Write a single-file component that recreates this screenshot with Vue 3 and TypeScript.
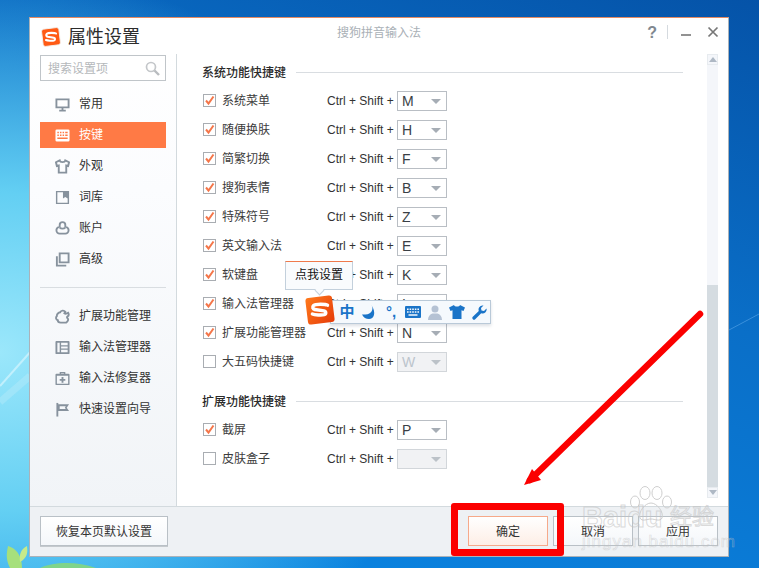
<script setup lang="ts">
interface Shape { d: string; fill?: boolean }
interface NavItem { label: string; active?: boolean; shapes: Shape[] }
interface Row { label: string; on: boolean; key: string; disabled?: boolean }

const mainNav: NavItem[] = [
  { label: '常用', shapes: [{ d: 'M1.5 2.5h13v8.5h-13z' }, { d: 'M8 11v3M4.5 14.5h7' }] },
  { label: '按键', active: true, shapes: [{ fill: true, d: 'M2 1.5h12a1.5 1.5 0 0 1 1.5 1.5v10a1.5 1.5 0 0 1-1.5 1.5H2A1.5 1.5 0 0 1 .5 13V3A1.5 1.5 0 0 1 2 1.5zM2.5 4v1.6h1.6V4zM5.3 4v1.6h1.6V4zM8.1 4v1.6h1.6V4zM10.9 4v1.6h2.6V4zM2.5 7v1.6h1.6V7zM5.3 7v1.6h1.6V7zM8.1 7v1.6h1.6V7zM10.9 7v1.6h2.6V7zM2.5 10v1.6h11V10z' }] },
  { label: '外观', shapes: [{ d: 'M5 1.5 1 3.5l1 4 2-.5V14.5h8V7l2 .5 1-4-4-2c-.5 2.5-5.5 2.5-6 0z' }] },
  { label: '词库', shapes: [{ fill: true, d: 'M1 1h14v14H1zM2.5 2.5v11h11V9l-2.5-1.5L8.5 9V2.5z' }] },
  { label: '账户', shapes: [{ d: 'M8 1.2a3 3 0 0 1 3 3V6c2 .6 3.500 1.800 3.500 3.700S13 13.500 11 13.500H5c-2 0-3.500-1.900-3.500-3.800S3 6.600 5 6V4.200a3 3 0 0 1 3-3z' }, { d: 'M5 7c1.500 1.500 4.500 1.500 6 0' }] },
  { label: '高级', shapes: [{ d: 'M5 1.500h9.500v9.500H5z' }, { d: 'M2 4.500v10h10' }] }
]
const extraNav: NavItem[] = [
  { label: '扩展功能管理', shapes: [{ d: 'M5.500 3.500C6.500 1.500 9.500 1 11 3l-1 1.500c1 .8 2.500.5 4-.5.800 1.500 1 3-.5 3.800-1 .6-1 1.600 0 2.200 1 .8.500 3-1.500 4.500H6c-1.500 0-3-1-3-2.500-2-.5-2.500-3-1-4.500-.3-2 2-3.800 3.500-4z' }] },
  { label: '输入法管理器', shapes: [{ fill: true, d: 'M1.5 1h13a1 1 0 0 1 1 1v12a1 1 0 0 1-1 1h-13a1 1 0 0 1-1-1V2a1 1 0 0 1 1-1zM2.500 3v10H5V3zM6.500 3v2.500h7V3zM6.500 7v2h7V7zM6.500 10.500V13h7v-2.500z' }] },
  { label: '输入法修复器', shapes: [{ fill: true, d: 'M5 3V1h6v2h3.500a1 1 0 0 1 1 1v10a1 1 0 0 1-1 1h-13a1 1 0 0 1-1-1V4a1 1 0 0 1 1-1zM6.500 3h3v-.500h-3zM2 5v8.500h12V5zM7 6.500h2v2h2v2H9v2H7v-2H5v-2h2z' }] },
  { label: '快速设置向导', shapes: [{ d: 'M2.500 1v14.500' }, { fill: true, d: 'M3 2.500h12l-2.500 3.500 2.500 3.500H3zM5 4.500v3h6.500l-1-1.500 1-1.500z' }] }
]

const systemRows: Row[] = [
  { label: '系统菜单', on: true, key: 'M' },
  { label: '随便换肤', on: true, key: 'H' },
  { label: '简繁切换', on: true, key: 'F' },
  { label: '搜狗表情', on: true, key: 'B' },
  { label: '特殊符号', on: true, key: 'Z' },
  { label: '英文输入法', on: true, key: 'E' },
  { label: '软键盘', on: true, key: 'K' },
  { label: '输入法管理器', on: true, key: 'I' },
  { label: '扩展功能管理器', on: true, key: 'N' },
  { label: '大五码快捷键', on: false, key: 'W', disabled: true }
]
const extraRows: Row[] = [
  { label: '截屏', on: true, key: 'P' },
  { label: '皮肤盒子', on: false, key: '', disabled: true }
]
const sections = [
  { title: '系统功能快捷键', rows: systemRows },
  { title: '扩展功能快捷键', rows: extraRows }
]
const navGroups = [mainNav, extraNav]
</script>

<template>
  <div class="desktop">
    <svg class="wall" width="759" height="568" viewBox="0 0 759 568">
      <path d="M0 386 32 350" stroke="#d6f5fd" stroke-width="2" opacity="0.7" fill="none" />
      <path d="M0 402 30 376" stroke="#d6f5fd" stroke-width="7" opacity="0.25" fill="none" />
      <path d="M729 330 759 314" stroke="#5aa6ea" stroke-width="1" opacity="0.6" fill="none" />
      <path d="M10 568C5 558 7 552 8 546c7 2 14 8 14 22z" fill="#a6e07c" />
      <path d="M20 562c-1-8 1-13 7-16 1 7 0 12-7 16z" fill="#c6ea8a" />
      <path d="M40 568c14-6 36-7 56 0z" fill="#7fd48a" />
    </svg>

    <div class="window">
      <header class="titlebar">
        <div class="brand">
          <svg class="logo" viewBox="0 0 24 24" width="22" height="22">
            <rect x="2.500" y="2.500" width="19" height="19" rx="2.500" fill="#ff5a14" stroke="#f4f0ec" stroke-width="1" transform="rotate(-7 12 12)" />
            <path d="M17.500 8.200c-1-.8-8.500-1.200-10 .3-1.300 1.300-.6 2.800 1 3.300l6.500 1c1.800.5 1.800 2.500.2 3-1.800.5-7 .3-8.700-.5" fill="none" stroke="#fff" stroke-width="2.300" stroke-linecap="round" />
          </svg>
          <span class="title">属性设置</span>
        </div>
        <span class="app-name">搜狗拼音输入法</span>
        <div class="controls">
          <span class="help">?</span>
          <i class="vline"></i>
          <svg class="ctl" width="12" height="12" viewBox="0 0 12 12"><path d="M1 9h10" stroke="#777" stroke-width="1.600" /></svg>
          <svg class="ctl close" width="12" height="12" viewBox="0 0 12 12"><path d="M1.500 1.500l9 9M10.500 1.500l-9 9" stroke="#777" stroke-width="1.700" /></svg>
        </div>
      </header>

      <div class="body">
        <aside class="sidebar">
          <div class="search">
            <span class="placeholder">搜索设置项</span>
            <svg width="15" height="15" viewBox="0 0 15 15"><circle cx="6" cy="6" r="4.500" fill="none" stroke="#c4c7ca" stroke-width="1.700" /><path d="M9.500 9.500 14 14" stroke="#b9bcbf" stroke-width="2.400" /></svg>
          </div>
          <template v-for="(group, g) in navGroups" :key="g">
            <div v-if="g > 0" class="side-divider"></div>
            <nav class="nav" :class="{ first: g === 0 }">
              <div v-for="item in group" :key="item.label" class="nav-item" :class="{ active: item.active }">
                <svg class="nav-icon" width="15" height="15" viewBox="0 0 16 16">
                  <path v-for="(s, i) in item.shapes" :key="i" :d="s.d" :class="s.fill ? 'fill' : 'line'" />
                </svg>
                <span>{{ item.label }}</span>
              </div>
            </nav>
          </template>
        </aside>

        <main class="content">
          <div class="settings">
            <section v-for="sec in sections" :key="sec.title" class="section">
              <div class="sec-head">
                <span>{{ sec.title }}</span>
                <i></i>
              </div>
              <div class="rows">
                <div v-for="row in sec.rows" :key="row.label" class="row">
                  <span class="check">
                    <svg v-if="row.on" width="11" height="11" viewBox="0 0 11 11"><path d="M2 5.500l2.500 3L9.500 1.500" fill="none" stroke="#f4764a" stroke-width="2" /></svg>
                  </span>
                  <span class="label">{{ row.label }}</span>
                  <span class="combo-text">Ctrl + Shift +</span>
                  <span class="select" :class="{ disabled: row.disabled }">
                    <span class="key">{{ row.key }}</span>
                    <i class="caret"></i>
                  </span>
                </div>
              </div>
            </section>
          </div>
          <div class="scrollbar">
            <span class="sb-btn"><i class="up"></i></span>
            <span class="sb-track"></span>
            <span class="sb-thumb"></span>
            <span class="sb-btn"><i class="down"></i></span>
          </div>
        </main>
      </div>

      <footer class="footer">
        <button class="btn wide">恢复本页默认设置</button>
        <div class="actions">
          <button class="btn primary">确定</button>
          <button class="btn">取消</button>
          <button class="btn">应用</button>
        </div>
      </footer>
    </div>

    <!-- overlays on the desktop -->
    <div class="tooltip">点我设置</div>

    <div class="toolbar">
      <svg class="tb-logo" viewBox="0 0 28 28" width="30" height="30">
        <defs>
          <linearGradient id="lg" x1="0" y1="0" x2="1" y2="1">
            <stop offset="0" stop-color="#ff7a1c" />
            <stop offset="1" stop-color="#e63c0a" />
          </linearGradient>
        </defs>
        <rect x="1.500" y="1.500" width="25" height="25" rx="3" fill="url(#lg)" transform="rotate(-7 14 14)" />
        <path d="M21 9.500c-1.500-1-11-1.500-13 .3-1.500 1.500-.7 3.300 1.200 3.800l8.500 1.200c2.200.6 2.200 3 .2 3.600-2.200.6-9 .3-11-.7" fill="none" stroke="#fff" stroke-width="3.200" stroke-linecap="round" />
      </svg>
      <div class="tb-bar">
        <span class="tb-slot zh">中</span>
        <span class="tb-slot">
          <svg width="16" height="16" viewBox="0 0 16 16"><path d="M10.500 1c2.500 4.500 0 9-6 9.500H1c1.500 3 4 4.500 7 4.500 5 0 7.500-6 2.500-14z" fill="#1a74c8" /></svg>
        </span>
        <span class="tb-slot punct">°,</span>
        <span class="tb-slot">
          <svg width="16" height="12" viewBox="0 0 16 12"><path fill="#1a74c8" fill-rule="evenodd" d="M1 0h14a1 1 0 0 1 1 1v10a1 1 0 0 1-1 1H1a1 1 0 0 1-1-1V1a1 1 0 0 1 1-1zM2 2.500V4h1.600V2.500zM4.600 2.500V4h1.600V2.500zM7.200 2.500V4h1.600V2.500zM9.800 2.500V4h1.600V2.500zM12.400 2.500V4H14V2.500zM2 5.300v1.500h1.600V5.300zM4.600 5.300v1.500h1.600V5.300zM7.200 5.300v1.500h1.600V5.300zM9.800 5.300v1.500h1.600V5.300zM12.400 5.300v1.500H14V5.300zM3.500 8.300v1.500h9V8.300z" /></svg>
        </span>
        <span class="tb-slot">
          <svg width="14" height="15" viewBox="0 0 14 15"><circle cx="7" cy="4" r="3.500" fill="#b5c2d4" /><path d="M0 15c0-3.500 2-6 4.500-6.500h5C12 9 14 11.500 14 15z" fill="#b5c2d4" /></svg>
        </span>
        <span class="tb-slot">
          <svg width="16" height="14" viewBox="0 0 16 14"><path d="M5 0 0 2.500l1.500 3.500 2-.7V14h9V5.300l2 .7L16 2.500 11 0C10.500 2 5.500 2 5 0z" fill="#1a74c8" /></svg>
        </span>
        <span class="tb-slot">
          <svg width="15" height="15" viewBox="0 0 15 15"><path d="M10.500 .5a4 4 0 0 0-3.700 5.400L.8 11.800a1.700 1.700 0 0 0 2.400 2.400l6-6A4 4 0 0 0 14.500 3.500L12 6 9.500 5.500 9 3l2.500-2.500z" fill="#1a74c8" /></svg>
        </span>
      </div>
    </div>

    <svg class="arrow" width="759" height="568" viewBox="0 0 759 568">
      <path d="M700 314 530 480" fill="none" stroke="#fb0000" stroke-width="6.500" stroke-linecap="round" />
      <path d="M524 485 532 469 541 480z" fill="#fb0000" />
    </svg>

    <div class="red-frame"></div>

    <div class="watermark">
      <svg class="paw" width="44" height="38" viewBox="0 0 44 38" fill="none" stroke="#cfcfcf" stroke-width="1">
        <ellipse cx="6" cy="16" rx="4.500" ry="6" />
        <ellipse cx="16" cy="7" rx="5" ry="6.500" />
        <ellipse cx="28" cy="7" rx="5" ry="6.500" />
        <ellipse cx="38" cy="16" rx="4.500" ry="6" />
        <path d="M22 17c-6 0-13 9-11 15 2 4 7 1 11 1s9 3 11-1c2-6-5-15-11-15z" />
      </svg>
      <div class="wm-top"><span class="wm-baidu">Baidu</span><span class="wm-jy">经验</span></div>
      <div class="wm-url">jingyan.baidu.com</div>
    </div>
  </div>
</template>

<style>
html, body { margin: 0; padding: 0; }
</style>

<style scoped>
.desktop {
  position: relative;
  width: 759px;
  height: 568px;
  box-sizing: border-box;
  padding: 17px 30px 11px 29px;
  overflow: hidden;
  background:
    radial-gradient(ellipse 440px 380px at 0 62%, #9be7fb 0, #63cff3 42%, rgba(30, 150, 230, 0) 100%),
    linear-gradient(200deg, #0553a8 0, #0a6fc8 40%, #0a88e6 100%);
  font-family: "Liberation Sans", "Noto Sans CJK SC", sans-serif;
  font-size: 12px;
  line-height: 16px;
  color: #333;
}
.wall {
  position: absolute;
  left: 0;
  top: 0;
}
.window {
  position: relative;
  display: flex;
  flex-direction: column;
  height: 100%;
  box-sizing: border-box;
  background: #fff;
  border: 1px solid #aab2b9;
  border-top-color: #e58a62;
}
.titlebar {
  display: grid;
  grid-template-columns: 1fr auto 1fr;
  align-items: center;
  height: 36px;
  flex: none;
}
.brand {
  display: flex;
  align-items: center;
  padding-left: 10px;
}
.logo { margin-right: 6px; margin-top: 1px; }
.title {
  font-size: 18px;
  line-height: 24px;
  color: #2c2c2c;
  padding-top: 2px;
}
.app-name { color: #a9b0b6; margin-top: -6px; }
.controls {
  display: flex;
  align-items: center;
  justify-content: flex-end;
  padding-right: 9px;
  margin-top: -8px;
}
.help {
  font-size: 16px;
  font-weight: 700;
  color: #808890;
  margin-right: 10px;
  padding-top: 2px;
}
.vline {
  width: 1px;
  height: 14px;
  background: #d5dadf;
  margin-right: 12px;
}
.ctl { display: block; }
.close { margin-left: 15px; }

.body {
  flex: 1;
  display: flex;
  min-height: 0;
}
.sidebar {
  width: 147px;
  flex: none;
  box-sizing: border-box;
  border-right: 1px solid #d3dade;
  padding: 1px 10px 0 10px;
  background: linear-gradient(180deg, #fff 0, #fbfcfe 30%, #f1f4f7 100%);
}
.search {
  display: flex;
  align-items: center;
  justify-content: space-between;
  height: 26px;
  box-sizing: border-box;
  border: 1px solid #c0c5c9;
  background: #fff;
  padding: 0 5px 0 7px;
}
.placeholder { color: #b5b8bb; padding-top: 2px; }
.nav {
  display: flex;
  flex-direction: column;
  gap: 5px;
}
.nav.first { margin-top: 10px; }
.nav-item {
  display: flex;
  align-items: center;
  height: 26px;
  padding-left: 15px;
  gap: 9px;
  color: #333;
}
.nav-item.active {
  background: #ff7a45;
  color: #fff;
}
.nav-icon { flex: none; }
.nav-icon .line {
  fill: none;
  stroke: #87929d;
  stroke-width: 2;
}
.nav-icon .fill { fill: #87929d; fill-rule: evenodd; }
.nav-item.active .nav-icon .fill { fill: #fff; }
.side-divider {
  height: 1px;
  background: #d9dde1;
  margin: 15px 0 15px;
}

.content {
  flex: 1;
  display: flex;
  min-width: 0;
  padding-right: 10px;
}
.settings {
  flex: 1;
  padding: 9px 24px 0 25px;
}
.section + .section { margin-top: 20px; }
.sec-head {
  display: flex;
  align-items: center;
  height: 18px;
  margin-bottom: 10px;
  font-weight: 500;
  color: #2a2a2a;
}
.sec-head span { padding-top: 2px; }
.sec-head i {
  flex: 1;
  height: 1px;
  background: #d9dde1;
  margin-left: 10px;
}
.rows {
  display: flex;
  flex-direction: column;
  gap: 9px;
}
.row {
  display: flex;
  align-items: flex-start;
  height: 20px;
  line-height: 20px;
}
.check {
  display: flex;
  align-items: center;
  justify-content: center;
  width: 13px;
  height: 13px;
  box-sizing: border-box;
  margin: 3px 0 0 1px;
  border: 1px solid #a9adb2;
  background: #fff;
  flex: none;
}
.label {
  width: 105px;
  margin-left: 6px;
  white-space: nowrap;
  color: #3c3c3c;
  flex: none;
}
.combo-text {
  width: 70px;
  flex: none;
  white-space: nowrap;
  color: #333;
}
.select {
  position: relative;
  display: flex;
  align-items: center;
  justify-content: space-between;
  width: 50px;
  height: 20px;
  box-sizing: border-box;
  border: 1px solid #b9bec4;
  background: #fff;
  padding: 0 5px 0 4px;
  flex: none;
}
.key {
  font-size: 14px;
  line-height: 18px;
  color: #3a3f45;
}
.caret {
  width: 0;
  height: 0;
  border-left: 5px solid transparent;
  border-right: 5px solid transparent;
  border-top: 5px solid #a6adb5;
}
.select.disabled {
  background: #f1f2f4;
  border-color: #d2d6da;
}
.select.disabled .key { color: #bcc4cc; }
.select.disabled .caret { border-top-color: #bcc2c8; }

.scrollbar {
  display: flex;
  flex-direction: column;
  width: 11px;
  height: 444px;
  background: #f4f6fa;
  box-sizing: border-box;
  flex: none;
}
.sb-btn {
  display: flex;
  align-items: center;
  justify-content: center;
  height: 11px;
  background: #f4f6fa;
  border: 1px solid #e7ebef;
  box-sizing: border-box;
  flex: none;
}
.sb-track { flex: 1; }
.sb-thumb {
  height: 202px;
  background: #d5dce1;
  flex: none;
}
.up, .down {
  width: 0;
  height: 0;
  border-left: 4.500px solid transparent;
  border-right: 4.500px solid transparent;
}
.up { border-bottom: 5px solid #aeb8c4; }
.down { border-top: 5px solid #aeb8c4; }

.footer {
  flex: none;
  display: flex;
  justify-content: space-between;
  height: 50px;
  box-sizing: border-box;
  padding: 9px 10px 0 10px;
  background: #eef1f4;
  border-top: 1px solid #d3dade;
}
.actions {
  display: flex;
  gap: 5px;
}
.btn {
  width: 80px;
  height: 30px;
  box-sizing: border-box;
  border: 1px solid #b9c0c6;
  background: linear-gradient(180deg, #fff 0, #f4f7fa 100%);
  font: inherit;
  color: #333;
  padding: 2px 0 0;
  margin: 0;
}
.btn.wide {
  width: 128px;
  box-shadow: 0 1px 0 #c4c9cd;
}
.btn.primary {
  border-color: #f6a98a;
  background: linear-gradient(180deg, #fff 0, #fdeee6 100%);
}

.tooltip {
  position: absolute;
  left: 285px;
  top: 261px;
  width: 68px;
  height: 29px;
  box-sizing: border-box;
  border: 1px solid #c3d0dc;
  border-top: 1px solid #ef7a4c;
  background: #f9fbfd;
  color: #111;
  text-align: center;
  line-height: 27px;
}
.tooltip::after {
  content: "";
  position: absolute;
  left: 30px;
  bottom: -5px;
  width: 7px;
  height: 7px;
  box-sizing: border-box;
  background: #f9fbfd;
  border-right: 1px solid #c3d0dc;
  border-bottom: 1px solid #c3d0dc;
  transform: rotate(45deg);
}
.toolbar {
  position: absolute;
  left: 305px;
  top: 295px;
  width: 186px;
  height: 32px;
}
.tb-logo {
  position: absolute;
  left: 0;
  top: 0;
  z-index: 1;
}
.tb-bar {
  position: absolute;
  left: 25px;
  top: 5px;
  right: 0;
  height: 24px;
  box-sizing: border-box;
  display: flex;
  align-items: center;
  padding-left: 5px;
  background: #f5f9fd;
  border: 1px solid #b9c9d8;
  box-shadow: 0 2px 3px rgba(80, 100, 120, 0.2);
}
.tb-slot {
  width: 22px;
  flex: none;
  display: flex;
  align-items: center;
  justify-content: center;
  color: #1a74c8;
}
.zh {
  font-size: 15px;
  font-weight: 700;
}
.punct {
  font-size: 15px;
  font-weight: 700;
  line-height: 16px;
}

.arrow {
  position: absolute;
  left: 0;
  top: 0;
  pointer-events: none;
}
.red-frame {
  position: absolute;
  left: 451px;
  top: 503px;
  width: 113px;
  height: 53px;
  box-sizing: border-box;
  border: 7px solid #fb0000;
  border-radius: 3px;
}
.watermark {
  position: absolute;
  left: 582px;
  top: 486px;
  width: 140px;
  height: 70px;
  pointer-events: none;
}
.paw {
  position: absolute;
  left: 47px;
  top: 0;
}
.wm-top {
  position: absolute;
  left: 0;
  top: 15px;
  display: flex;
  align-items: center;
  white-space: nowrap;
}
.wm-baidu {
  font-size: 29px;
  line-height: 32px;
  font-weight: 700;
  color: transparent;
  -webkit-text-stroke: 1px rgba(195, 195, 195, 0.6);
  width: 88px;
}
.wm-jy {
  font-size: 22px;
  line-height: 32px;
  color: transparent;
  -webkit-text-stroke: 1px rgba(195, 195, 195, 0.6);
}
.wm-url {
  position: absolute;
  left: 0;
  top: 46px;
  font-size: 17px;
  line-height: 20px;
  letter-spacing: 1px;
  white-space: nowrap;
  color: transparent;
  -webkit-text-stroke: 0.6px rgba(195, 195, 195, 0.55);
}
</style>
